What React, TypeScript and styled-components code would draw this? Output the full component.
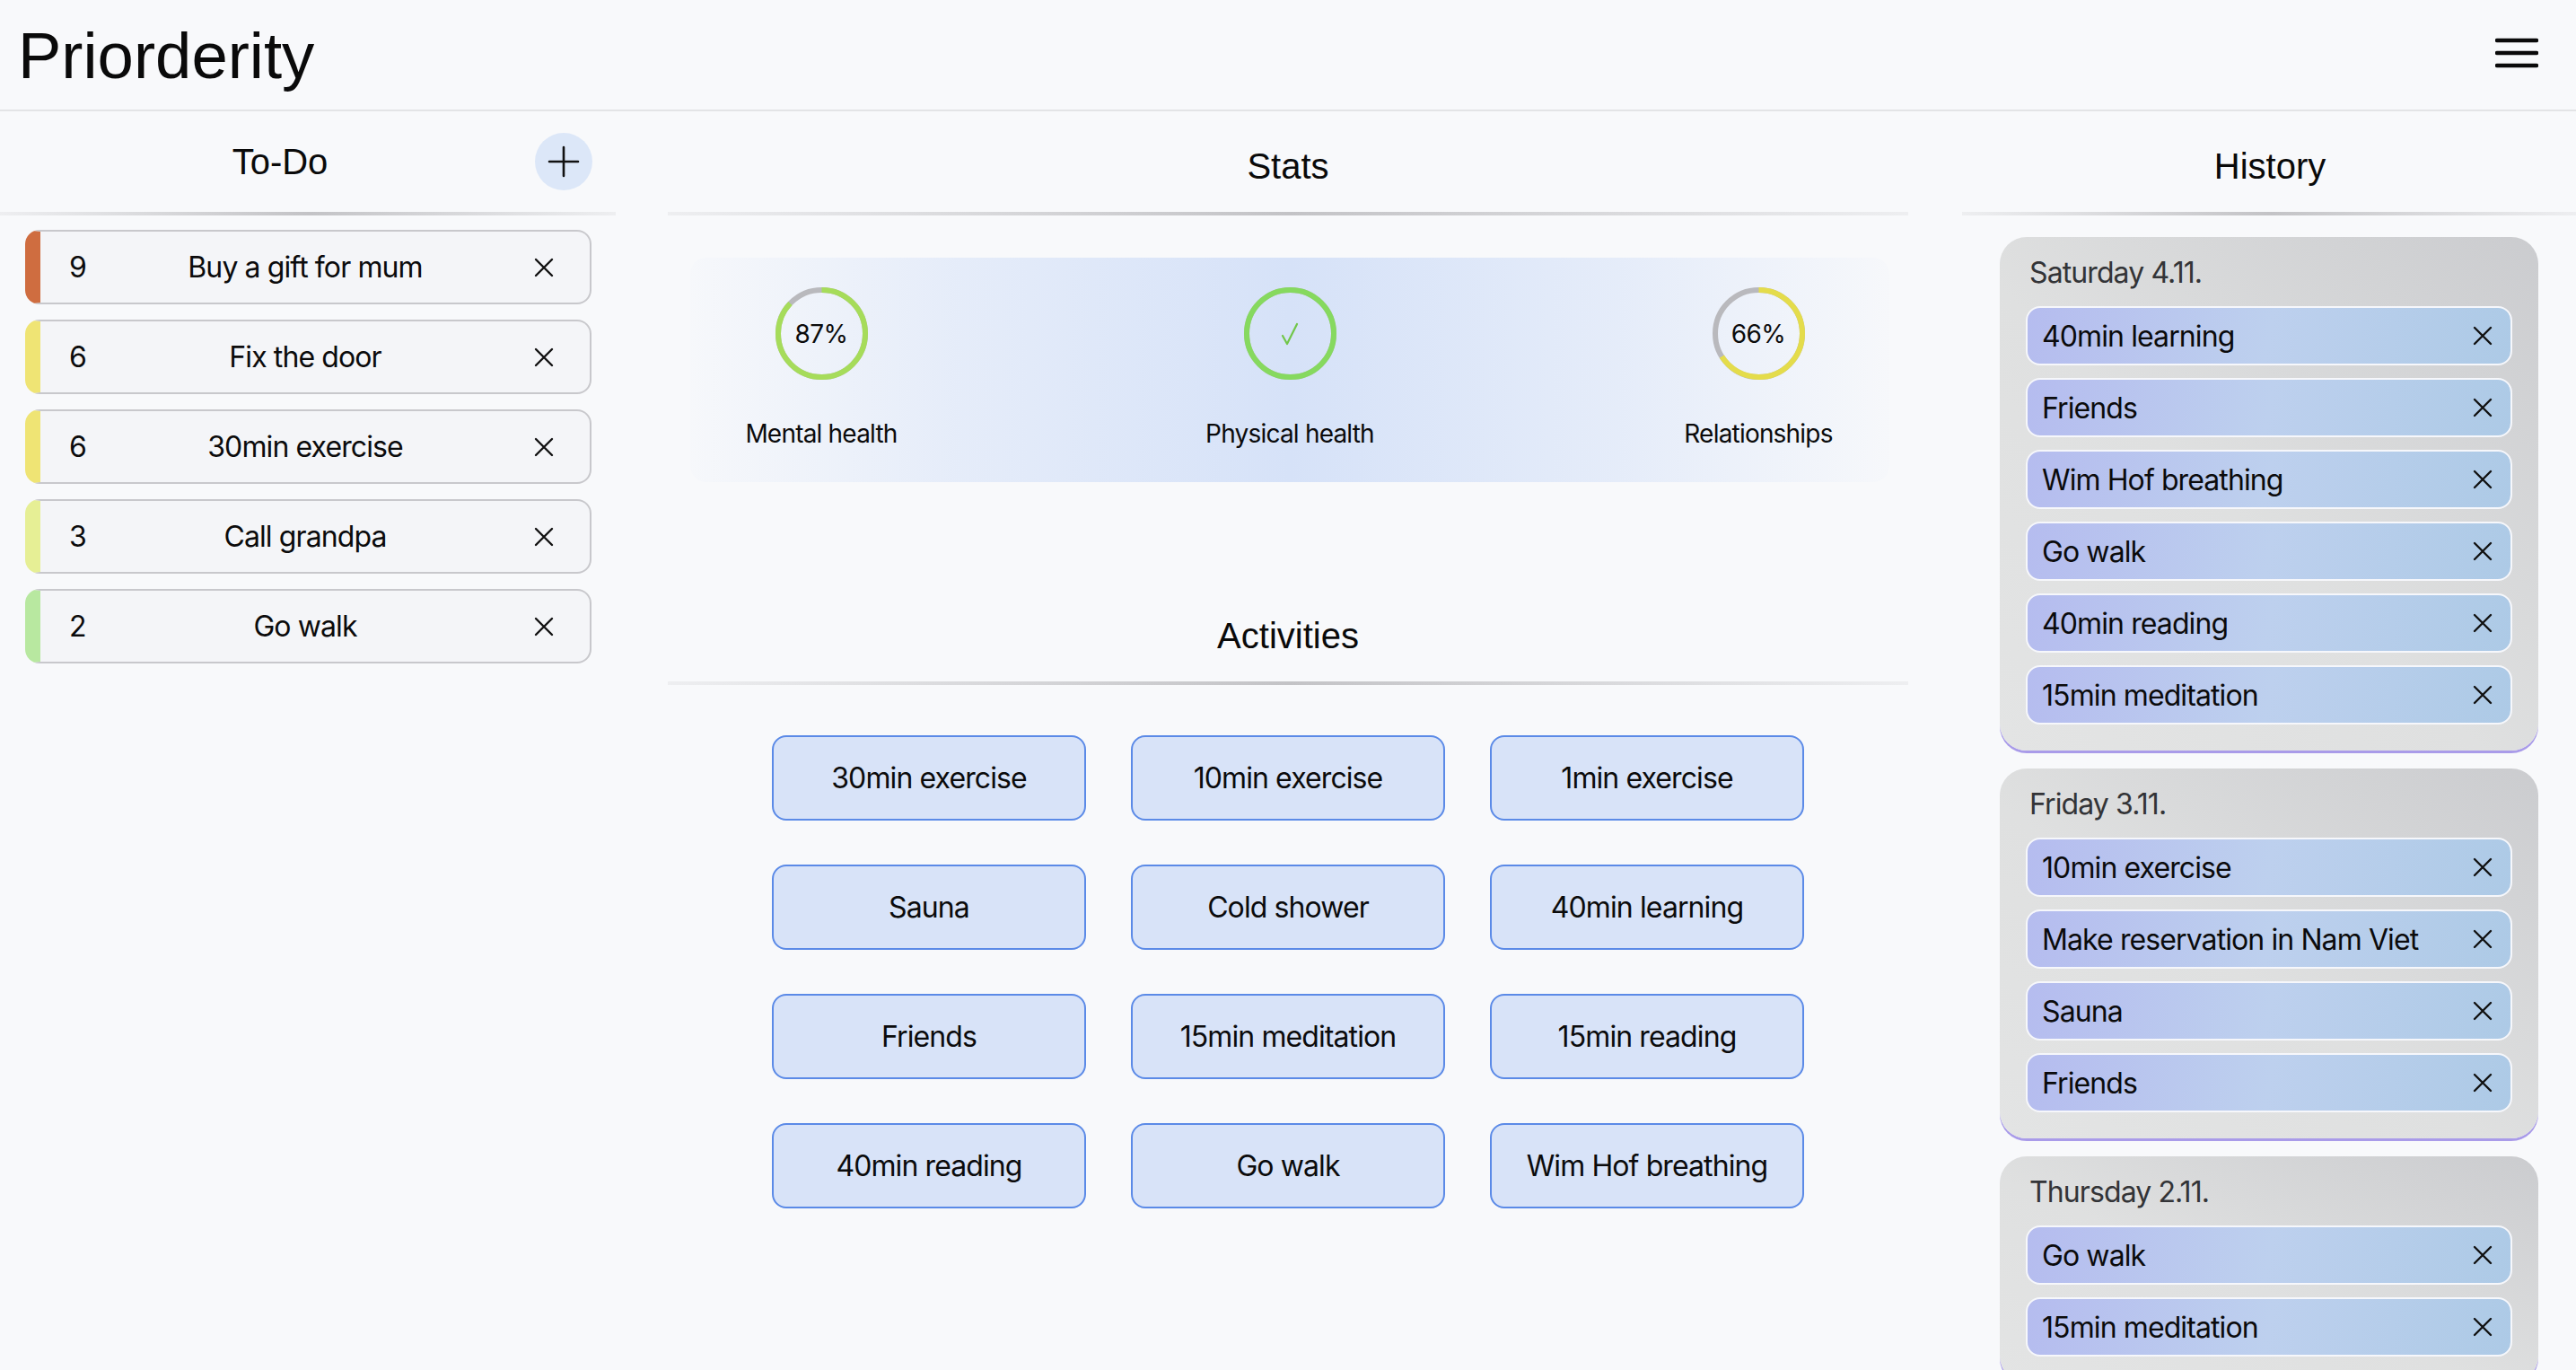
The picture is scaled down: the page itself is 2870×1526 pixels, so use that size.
import React from "react";
import styled, { createGlobalStyle } from "styled-components";

const GlobalStyle = createGlobalStyle`
  *, *::before, *::after { box-sizing: border-box; }
  html, body { margin: 0; padding: 0; background: #f8f9fb; }
  body { font-family: Inter, "Noto Sans", sans-serif; color: #0b0b0c; }
`;

const Page = styled.div`
  min-height: 100vh;
  background: #f8f9fb;
`;

const TopBar = styled.header`
  height: 124px;
  display: flex;
  align-items: center;
  justify-content: space-between;
  padding: 2px 42px 0 20px;
  border-bottom: 2px solid #e3e4e6;
`;

const Logo = styled.h1`
  margin: 0;
  font-family: "Liberation Sans", Arial, sans-serif;
  font-weight: 400;
  font-size: 72.5px;
  line-height: 1.15;
  color: #0a0a0a;
`;

const MenuButton = styled.button`
  border: 0;
  padding: 0;
  margin-bottom: 6px;
  background: transparent;
  display: flex;
  width: 48px;
  height: 34px;
`;

const Main = styled.main`
  display: grid;
  grid-template-columns: 686px 1fr 684px;
  align-items: start;
`;

const Column = styled.section`
  display: flex;
  flex-direction: column;
  padding-bottom: 40px;
`;

const SectionHeader = styled.div<{ $shift?: number }>`
  height: 112px;
  display: flex;
  align-items: center;
  padding: ${(p) => p.$shift ?? 10}px 26px 0 28px;
`;

const SectionTitle = styled.h2`
  flex: 1;
  margin: 0;
  text-align: center;
  font-family: "Liberation Sans", Arial, sans-serif;
  font-weight: 400;
  font-size: 40px;
  line-height: 46px;
  color: #0a0a0a;
`;

const AddButton = styled.button`
  width: 64px;
  height: 64px;
  border-radius: 50%;
  border: 0;
  padding: 0;
  background: #dce7f8;
  display: flex;
  align-items: center;
  justify-content: center;
`;

const Divider = styled.div`
  height: 4px;
  background: linear-gradient(
    90deg,
    rgba(196, 196, 199, 0.2) 0%,
    #c3c3c6 50%,
    rgba(196, 196, 199, 0.2) 100%
  );
`;

/* ---------- To-Do ---------- */

const TodoList = styled.div`
  display: flex;
  flex-direction: column;
  gap: 17px;
  padding: 16px 27px 0 28px;
`;

const TodoCard = styled.div<{ $accent: string }>`
  height: 83px;
  display: grid;
  grid-template-columns: 50px 1fr 64px;
  align-items: center;
  background: #f4f5f8;
  border: 2px solid #c8c8cc;
  border-left: 17px solid ${(p) => p.$accent};
  border-radius: 16px;
  padding: 0 40px 0 32px;
  font-size: 32px;
  letter-spacing: -0.9px;
`;

const TodoPriority = styled.span`
  text-align: left;
`;

const TodoTitle = styled.span`
  text-align: center;
`;

const IconButton = styled.button`
  border: 0;
  padding: 0;
  background: transparent;
  display: flex;
  justify-self: end;
  align-items: center;
`;

/* ---------- Stats ---------- */

const CenterInner = styled.div`
  display: flex;
  flex-direction: column;
  padding: 0 60px 0 58px;
`;

const PlainHeader = styled(SectionHeader)`
  padding-left: 0;
  padding-right: 0;
`;

const StatsPanel = styled.div`
  margin: 47px 21px 0 25px;
  height: 250px;
  display: flex;
  justify-content: space-between;
  padding: 33px 36px 0;
  border-radius: 18px;
  background: linear-gradient(
    90deg,
    rgba(214, 226, 248, 0.05) 0%,
    rgba(214, 226, 248, 0.55) 22%,
    #d6e2f8 50%,
    rgba(214, 226, 248, 0.55) 78%,
    rgba(214, 226, 248, 0.05) 100%
  );
`;

const StatItem = styled.div`
  width: 220px;
  display: flex;
  flex-direction: column;
  align-items: center;
`;

const Ring = styled.div`
  width: 103px;
  height: 103px;
  display: grid;
  place-items: center;
  & > * {
    grid-area: 1 / 1;
  }
`;

const RingValue = styled.span`
  font-size: 28px;
  letter-spacing: -0.6px;
  color: #0b0b0c;
`;

const StatLabel = styled.span`
  margin-top: 43px;
  font-size: 28px;
  line-height: 34px;
  letter-spacing: -0.8px;
  white-space: nowrap;
`;

/* ---------- Activities ---------- */

const ActivitiesHeader = styled(PlainHeader)`
  margin-top: 110px;
`;

const ActivityGrid = styled.div`
  display: grid;
  grid-template-columns: repeat(3, 350px);
  gap: 49px 50px;
  justify-content: center;
  margin-top: 56px;
`;

const ActivityButton = styled.button`
  height: 95px;
  border: 2.5px solid #5b8ae7;
  border-radius: 16px;
  background: #d8e3f8;
  font-family: Inter, "Noto Sans", sans-serif;
  font-size: 32px;
  letter-spacing: -0.9px;
  color: #0b0b0c;
`;

/* ---------- History ---------- */

const DayList = styled.div`
  display: flex;
  flex-direction: column;
  gap: 20px;
  padding: 24px 42px 0;
`;

const DayCard = styled.article`
  border-radius: 30px;
  padding: 20px 29px 29px;
  background: linear-gradient(to top right, #e3e4e4 0%, #dfe0e0 45%, #cbcccf 100%);
  box-shadow: 0 3px 0 #a99be9;
  display: flex;
  flex-direction: column;
  gap: 14px;
`;

const DayTitle = styled.h3`
  margin: 0 0 3px;
  padding-left: 4px;
  font-weight: 400;
  font-size: 32px;
  line-height: 40px;
  letter-spacing: -0.9px;
  color: #333437;
`;

const HistoryEntry = styled.div`
  height: 66px;
  display: flex;
  align-items: center;
  justify-content: space-between;
  padding: 0 20px 0 16px;
  border: 2px solid #f6f7fb;
  border-radius: 16px;
  background: linear-gradient(100deg, #b5bcef 0%, #bdd0ee 50%, #adcae6 100%);
  font-size: 32px;
  letter-spacing: -0.9px;
  color: #0b0b0c;
`;

/* ---------- Icons ---------- */

const CloseIcon = () => (
  <svg width="22" height="22" viewBox="0 0 22 22" aria-hidden="true">
    <path d="M2 2L20 20M20 2L2 20" stroke="#111" strokeWidth="2.4" strokeLinecap="round" />
  </svg>
);

const PlusIcon = () => (
  <svg width="36" height="36" viewBox="0 0 36 36" aria-hidden="true">
    <path d="M18 2V34M2 18H34" stroke="#111" strokeWidth="2.6" strokeLinecap="round" />
  </svg>
);

const MenuIcon = () => (
  <svg width="48" height="34" viewBox="0 0 48 34" aria-hidden="true">
    <path d="M2 3H46M2 17H46M2 31H46" stroke="#0a0a0a" strokeWidth="4.5" strokeLinecap="round" />
  </svg>
);

const CheckIcon = () => (
  <svg width="22" height="26" viewBox="0 0 22 26" aria-hidden="true">
    <path d="M3 15L8 24L19 2" stroke="#72c64a" strokeWidth="2.2" fill="none" strokeLinecap="round" strokeLinejoin="round" />
  </svg>
);

const ProgressRing = ({ value, color }: { value: number; color: string }) => {
  const r = 48.5;
  const c = 2 * Math.PI * r;
  return (
    <svg width="103" height="103" viewBox="0 0 103 103" aria-hidden="true">
      <circle cx="51.5" cy="51.5" r={r} fill="none" stroke="#b9b9bd" strokeWidth="6" />
      <circle
        cx="51.5"
        cy="51.5"
        r={r}
        fill="none"
        stroke={color}
        strokeWidth="6"
        strokeDasharray={`${(value / 100) * c} ${c}`}
        transform="rotate(-90 51.5 51.5)"
      />
    </svg>
  );
};

/* ---------- Data ---------- */

const todos = [
  { p: 9, t: "Buy a gift for mum", c: "#cf6d40" },
  { p: 6, t: "Fix the door", c: "#efe474" },
  { p: 6, t: "30min exercise", c: "#efe474" },
  { p: 3, t: "Call grandpa", c: "#e6ef95" },
  { p: 2, t: "Go walk", c: "#b8e8a0" },
];

const stats = [
  { label: "Mental health", value: 87, color: "#a6dc5a" },
  { label: "Physical health", value: 100, color: "#86d95f" },
  { label: "Relationships", value: 66, color: "#e4dc4b" },
];

const activities = [
  "30min exercise",
  "10min exercise",
  "1min exercise",
  "Sauna",
  "Cold shower",
  "40min learning",
  "Friends",
  "15min meditation",
  "15min reading",
  "40min reading",
  "Go walk",
  "Wim Hof breathing",
];

const history = [
  {
    day: "Saturday 4.11.",
    items: ["40min learning", "Friends", "Wim Hof breathing", "Go walk", "40min reading", "15min meditation"],
  },
  {
    day: "Friday 3.11.",
    items: ["10min exercise", "Make reservation in Nam Viet", "Sauna", "Friends"],
  },
  {
    day: "Thursday 2.11.",
    items: ["Go walk", "15min meditation"],
  },
];

export default function App() {
  return (
    <Page>
      <GlobalStyle />
      <TopBar>
        <Logo>Priorderity</Logo>
        <MenuButton aria-label="Menu">
          <MenuIcon />
        </MenuButton>
      </TopBar>
      <Main>
        <Column>
          <SectionHeader $shift={0}>
            <SectionTitle>To-Do</SectionTitle>
            <AddButton aria-label="Add">
              <PlusIcon />
            </AddButton>
          </SectionHeader>
          <Divider />
          <TodoList>
            {todos.map((t) => (
              <TodoCard key={t.t} $accent={t.c}>
                <TodoPriority>{t.p}</TodoPriority>
                <TodoTitle>{t.t}</TodoTitle>
                <IconButton aria-label="Remove">
                  <CloseIcon />
                </IconButton>
              </TodoCard>
            ))}
          </TodoList>
        </Column>

        <Column>
          <CenterInner>
            <PlainHeader>
              <SectionTitle>Stats</SectionTitle>
            </PlainHeader>
            <Divider />
            <StatsPanel>
              {stats.map((s) => (
                <StatItem key={s.label}>
                  <Ring>
                    <ProgressRing value={s.value} color={s.color} />
                    {s.value >= 100 ? <CheckIcon /> : <RingValue>{s.value}%</RingValue>}
                  </Ring>
                  <StatLabel>{s.label}</StatLabel>
                </StatItem>
              ))}
            </StatsPanel>
            <ActivitiesHeader>
              <SectionTitle>Activities</SectionTitle>
            </ActivitiesHeader>
            <Divider />
            <ActivityGrid>
              {activities.map((a) => (
                <ActivityButton key={a}>{a}</ActivityButton>
              ))}
            </ActivityGrid>
          </CenterInner>
        </Column>

        <Column>
          <SectionHeader>
            <SectionTitle>History</SectionTitle>
          </SectionHeader>
          <Divider />
          <DayList>
            {history.map((d) => (
              <DayCard key={d.day}>
                <DayTitle>{d.day}</DayTitle>
                {d.items.map((it) => (
                  <HistoryEntry key={it}>
                    <span>{it}</span>
                    <IconButton aria-label="Remove">
                      <CloseIcon />
                    </IconButton>
                  </HistoryEntry>
                ))}
              </DayCard>
            ))}
          </DayList>
        </Column>
      </Main>
    </Page>
  );
}
